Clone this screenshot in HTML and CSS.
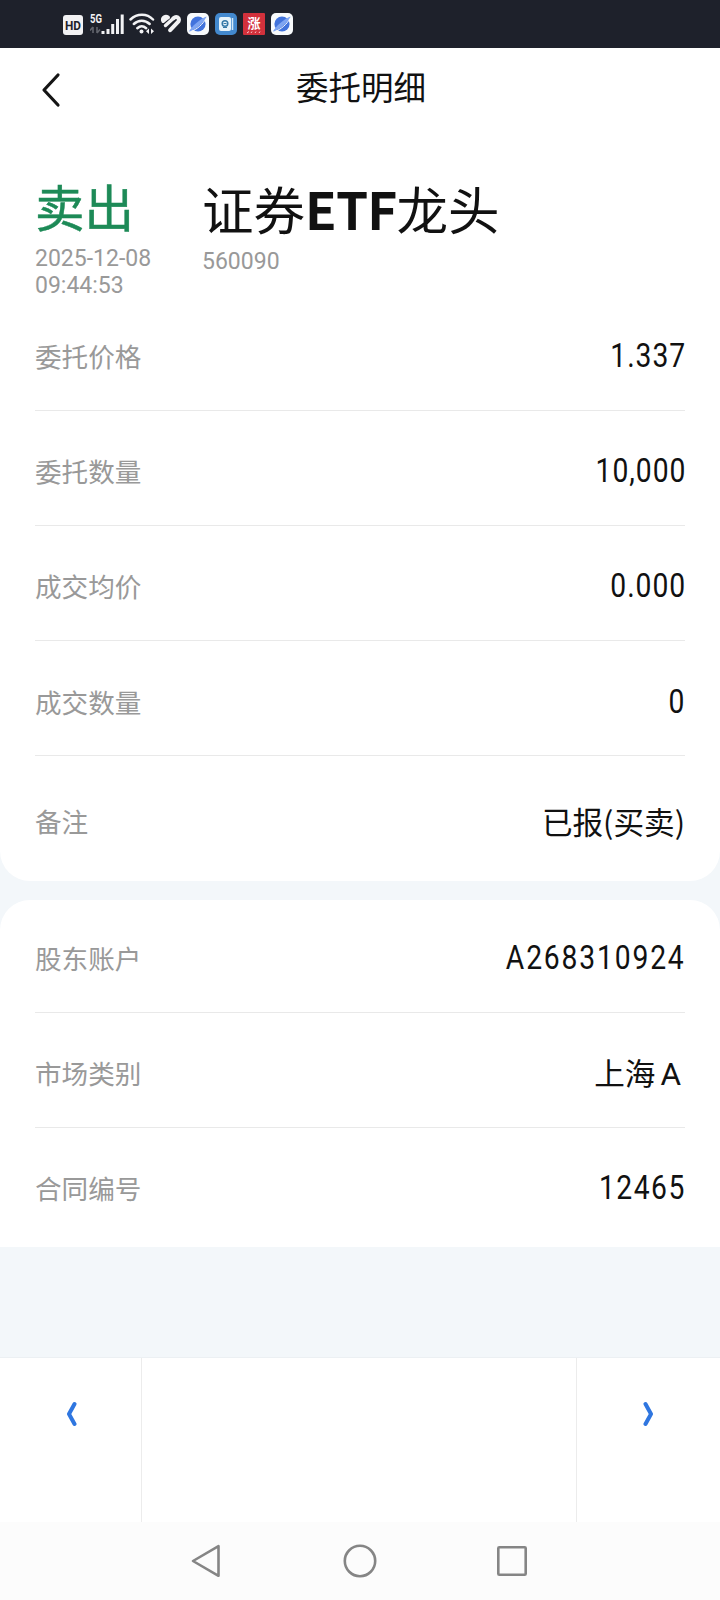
FILE: index.html
```html
<!DOCTYPE html>
<html lang="zh-CN">
<head>
    <meta charset="UTF-8">
    <meta name="viewport" content="width=device-width, initial-scale=1.0">
    <title>委托明细</title>
    <link rel="stylesheet" href="styles.css">
</head>
<body>
    <div class="status-bar">
        <svg class="icon-hd" width="20" height="20" viewBox="0 0 20 20">
            <rect width="20" height="20" rx="3" fill="#f2f2f4"/>
            <text x="10" y="14.5" text-anchor="middle" textLength="16" lengthAdjust="spacingAndGlyphs" class="hd-text">HD</text>
        </svg>
        <svg class="icon-signal" width="34" height="22" viewBox="0 0 34 22">
            <text x="0" y="10" textLength="12" lengthAdjust="spacingAndGlyphs" class="net-text">5G</text>
            <path d="M3 14v6M0 17.5l3-3.5M7 14v6M10 16.5l-3 3.5" stroke="#62656d" stroke-width="1.6" fill="none"/>
            <path d="M13 18v3M18 16v5M22.7 11v10M27.5 6v15M32.2 1.5v19.5" stroke="#f2f2f4" stroke-width="3"/>
        </svg>
        <svg class="icon-wifi" width="26" height="22" viewBox="0 0 26 22">
            <g fill="none" stroke="#f2f2f4" stroke-width="2.5" stroke-linecap="round">
                <path d="M1.5 6.5C8 .2 18 .2 24 6.5"/>
                <path d="M4.8 11C9.5 6.5 16 6.5 20.7 11"/>
                <path d="M8.3 15.2c2.7-2.4 6.2-2.4 8.9 0"/>
            </g>
            <circle cx="12.5" cy="18.5" r="2" fill="#f2f2f4"/>
            <path d="M20 15.5v5.5l-3-2.75zM22 15.5v5.5l3-2.75z" fill="#f2f2f4"/>
        </svg>
        <svg class="icon-health" width="22" height="20" viewBox="0 0 22 20">
            <g fill="none" stroke="#f2f2f4" stroke-linecap="round">
                <path d="M3 6.5C2.5 3.5 5.5 2 8 3.5M3.2 7L7.5 3.5" stroke-width="4"/>
                <path d="M5.5 11.5L13.5 4.2" stroke-width="3.4"/>
                <path d="M13.5 4.2C16.5 1.5 20 4 18.5 7.5L10.2 16.2" stroke-width="4"/>
            </g>
        </svg>
        <svg class="icon-app" width="22" height="22" viewBox="0 0 22 22">
            <rect width="22" height="22" rx="5" fill="#f8fafc"/>
            <circle cx="11" cy="11" r="7.6" fill="#4273dc"/>
            <path d="M2 18.5C3 15 14 5 19.5 3.5C19 7 9 17.5 2 18.5z" fill="#7fa5f1"/>
            <path d="M4 18.5C10 16.5 16 11 19 5.5" stroke="#f8fafc" stroke-width="1" fill="none"/>
        </svg>
        <svg class="icon-app" width="22" height="22" viewBox="0 0 22 22">
            <rect width="22" height="22" rx="5" fill="#4389cf"/>
            <rect x="4" y="4" width="12" height="14" rx="2" fill="#e6f3fb"/>
            <path d="M17.5 5v12" stroke="#d2e8f7" stroke-width="1.5"/>
            <circle cx="10" cy="10.5" r="2.8" fill="none" stroke="#3478a8" stroke-width="1.5"/>
            <path d="M8.5 10.5h3M8 14.5h4" stroke="#3478a8"/>
        </svg>
        <svg class="icon-app" width="22" height="22" viewBox="0 0 22 22">
            <rect width="22" height="22" rx="1" fill="#d2313c"/>
            <text x="11" y="15" text-anchor="middle" class="zhang-text">涨</text>
            <path d="M4 20l2-1.5M8 20l1-1.5M12 20l1-1.5M16 20l1-1.5" stroke="#f6c9cb"/>
        </svg>
        <svg class="icon-app" width="22" height="22" viewBox="0 0 22 22">
            <rect width="22" height="22" rx="5" fill="#f8fafc"/>
            <circle cx="11" cy="11" r="7.6" fill="#4273dc"/>
            <path d="M2 18.5C3 15 14 5 19.5 3.5C19 7 9 17.5 2 18.5z" fill="#7fa5f1"/>
            <path d="M4 18.5C10 16.5 16 11 19 5.5" stroke="#f8fafc" stroke-width="1" fill="none"/>
        </svg>
    </div>

    <div class="card card-main">
        <div class="header">
            <svg class="back" width="20" height="36" viewBox="0 0 20 36">
                <path d="M17 3L3 18L17 33" fill="none" stroke="#151515" stroke-width="3.2" stroke-linecap="round" stroke-linejoin="round"/>
            </svg>
            <h1 class="title">委托明细</h1>
        </div>

        <div class="summary">
            <div class="side">
                <div class="direction">卖出</div>
                <div class="time">2025-12-08<br>09:44:53</div>
            </div>
            <div class="stock">
                <div class="stock-name">证券<b>ETF</b>龙头</div>
                <div class="stock-code">560090</div>
            </div>
        </div>

        <div class="row">
            <span class="label">委托价格</span>
            <span class="value value-decimal">1.337</span>
        </div>
        <div class="row">
            <span class="label">委托数量</span>
            <span class="value value-decimal">10,000</span>
        </div>
        <div class="row">
            <span class="label">成交均价</span>
            <span class="value value-decimal">0.000</span>
        </div>
        <div class="row row-deal">
            <span class="label">成交数量</span>
            <span class="value">0</span>
        </div>
        <div class="row row-note">
            <span class="label">备注</span>
            <span class="value-cn">已报(买卖)</span>
        </div>
    </div>

    <div class="card card-account">
        <div class="row">
            <span class="label">股东账户</span>
            <span class="value value-account">A268310924</span>
        </div>
        <div class="row">
            <span class="label">市场类别</span>
            <span class="value-cn value-market">上海<span class="market-a">A</span></span>
        </div>
        <div class="row">
            <span class="label">合同编号</span>
            <span class="value">12465</span>
        </div>
    </div>

    <div class="pager">
        <div class="pager-btn">
            <svg width="12" height="26" viewBox="0 0 12 26">
                <path d="M9.5 3L4 13L9.5 23" fill="none" stroke="#2f76e0" stroke-width="4" stroke-linecap="round" stroke-linejoin="round"/>
            </svg>
        </div>
        <div class="pager-middle"></div>
        <div class="pager-btn">
            <svg width="12" height="26" viewBox="0 0 12 26">
                <path d="M2.5 3L8 13L2.5 23" fill="none" stroke="#2f76e0" stroke-width="4" stroke-linecap="round" stroke-linejoin="round"/>
            </svg>
        </div>
    </div>

    <div class="nav-bar">
        <svg width="36" height="36" viewBox="0 0 36 36">
            <path d="M28.5 3.2V32.8L3 18z"/>
        </svg>
        <svg width="36" height="36" viewBox="0 0 36 36">
            <circle cx="18" cy="18" r="15.2"/>
        </svg>
        <svg width="36" height="36" viewBox="0 0 36 36">
            <rect x="4.3" y="4.3" width="27.4" height="27.4" rx="1"/>
        </svg>
    </div>
</body>
</html>
```
FILE: styles.css
```css
* {
    box-sizing: border-box;
}
body {
    margin: 0;
    width: 720px;
    height: 1600px;
    display: flex;
    flex-direction: column;
    background-color: #f3f7fa;
    font-family: "Noto Sans CJK SC", sans-serif;
    color: #111;
    overflow: hidden;
}
svg {
    display: block;
    flex-shrink: 0;
}

/* system status bar */
.status-bar {
    height: 48px;
    display: flex;
    align-items: center;
    padding-left: 63px;
    background-color: #1e212b;
}
.icon-hd {
    margin: 2px 7px 0 0;
}
.icon-signal {
    margin-right: 5px;
}
.icon-wifi {
    margin-right: 5px;
}
.icon-health {
    margin-right: 5px;
}
.icon-app {
    margin-right: 6px;
}
.hd-text {
    font: bold 12px Roboto, sans-serif;
    fill: #1e212b;
}
.net-text {
    font: bold 12px Roboto, sans-serif;
    fill: #f2f2f4;
}
.zhang-text {
    font: bold 13px "Noto Sans CJK SC", sans-serif;
    fill: #fff;
}

.card {
    background-color: #fff;
    padding: 0 35px;
}
.card-main {
    height: 833px;
    border-radius: 0 0 30px 30px;
}
.card-account {
    height: 347px;
    margin-top: 19px;
    border-radius: 30px 30px 0 0;
}

.header {
    height: 84px;
    display: grid;
    grid-template-columns: 1fr auto 1fr;
    align-items: center;
}
.back {
    margin-left: 6px;
}
.title {
    margin: 0;
    padding: 0 0 9px 2px;
    font-size: 32.5px;
    line-height: 48px;
    font-weight: 400;
}

.summary {
    height: 164px;
    display: flex;
    padding-top: 37px;
}
.side {
    width: 167px;
}
.direction {
    height: 76px;
    font-size: 49.5px;
    line-height: 73px;
    color: #1d8a57;
    -webkit-text-stroke: 0.5px #1d8a57;
}
.time,
.stock-code {
    font-family: Roboto, sans-serif;
    font-size: 23px;
    line-height: 27px;
    color: #999;
}
.stock-name {
    height: 78px;
    font-size: 51.5px;
    line-height: 77px;
    white-space: nowrap;
}
.stock-name b {
    letter-spacing: -0.8px;
}
.stock-code {
    margin-top: 1px;
}

.row {
    height: 115px;
    display: flex;
    justify-content: space-between;
    align-items: center;
    padding-top: 6px;
    border-bottom: 1px solid #e9e9e9;
}
.row:last-child {
    border-bottom: none;
}
.row-deal {
    padding-top: 8px;
}
.row-note {
    height: 125px;
    padding-top: 5px;
}
.card-account .row:first-child {
    height: 113px;
    padding-top: 4px;
}
.card-account .row:last-child {
    padding-top: 4px;
}
.label {
    font-size: 26.6px;
    line-height: 40px;
    color: #999;
}
/* narrow digits with wide tracking */
.value {
    margin-right: -1px;
    font-family: Roboto, sans-serif;
    font-size: 32.5px;
    line-height: 40px;
    letter-spacing: 1.7px;
    transform: scaleX(0.87);
    transform-origin: right center;
}
.value-decimal {
    letter-spacing: 1.1px;
}
.value-account {
    letter-spacing: 2.1px;
}
.value-cn {
    font-size: 30.6px;
    line-height: 40px;
}
.value-market {
    padding-right: 4px;
}
.market-a {
    margin-left: 5px;
    font-family: Roboto, sans-serif;
    font-size: 31.5px;
}

/* previous / next order */
.pager {
    height: 165px;
    margin-top: 110px;
    display: grid;
    grid-template-columns: 141px 1fr 143px;
    background-color: #fff;
    border-top: 1px solid #ecf0f3;
}
.pager-btn {
    display: flex;
    justify-content: center;
    padding-top: 43px;
}
.pager-middle {
    border-left: 1px solid #ececec;
    border-right: 1px solid #ececec;
}

.nav-bar {
    flex: 1;
    display: flex;
    justify-content: center;
    align-items: center;
    gap: 116px;
    background-color: #fcfcfc;
}
.nav-bar svg {
    fill: none;
    stroke: #858585;
    stroke-width: 2.6;
    stroke-linejoin: round;
}
```
